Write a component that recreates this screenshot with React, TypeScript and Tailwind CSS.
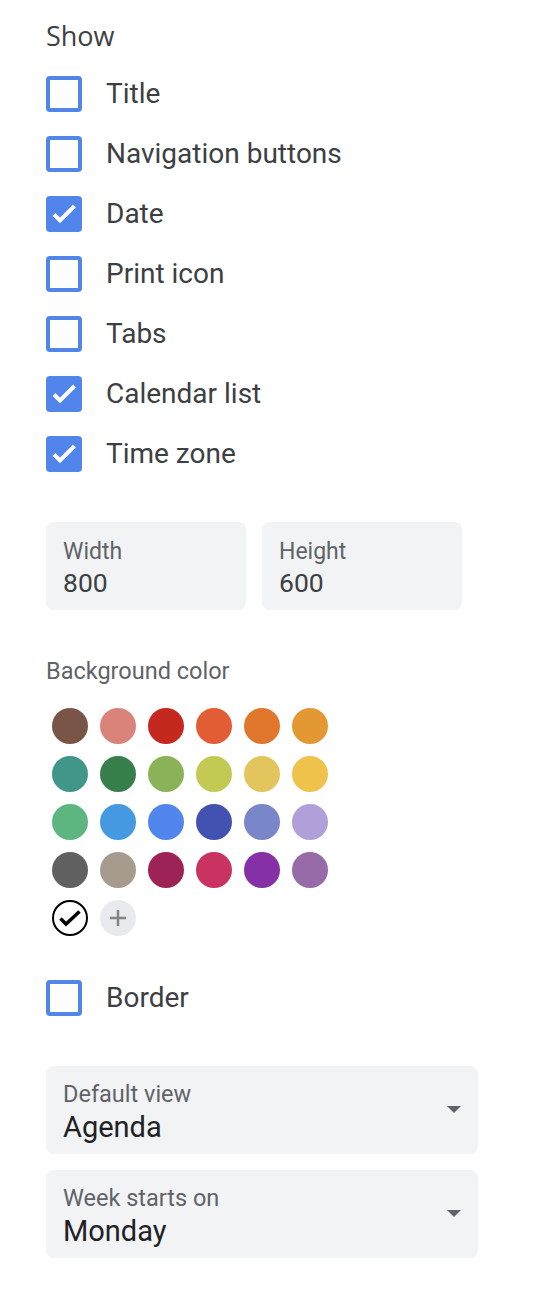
const options = [
  { label: "Title", checked: false },
  { label: "Navigation buttons", checked: false },
  { label: "Date", checked: true },
  { label: "Print icon", checked: false },
  { label: "Tabs", checked: false },
  { label: "Calendar list", checked: true },
  { label: "Time zone", checked: true },
];

const colors = [
  ["#795548", "#d9837a", "#c5281e", "#e35d34", "#e0772c", "#e49833"],
  ["#41968a", "#367f4b", "#8ab259", "#c3ca54", "#e2c55d", "#efc24b"],
  ["#5db57f", "#4599e0", "#5386ed", "#4351b0", "#7986c9", "#b19fd9"],
  ["#616161", "#a79b8e", "#9d2357", "#c83361", "#8530a6", "#976ba8"],
];

const Checkbox = ({ checked }: { checked: boolean }) =>
  checked ? (
    <div className="w-9 h-9 rounded-[4px] bg-[#5185ec]">
      <svg width="36" height="36" viewBox="0 0 36 36">
        <path d="M8 18.5l6 6L28.5 10" fill="none" stroke="white" strokeWidth="4" />
      </svg>
    </div>
  ) : (
    <div className="w-9 h-9 rounded-[4px] border-[4px] border-[#5185ec] bg-white" />
  );

const CheckRow = ({ label, checked }: { label: string; checked: boolean }) => (
  <div className="h-[60px] flex items-center">
    <Checkbox checked={checked} />
    <span className="ml-[24px] text-[28px] text-[#3c4043]">{label}</span>
  </div>
);

const Caret = () => (
  <svg width="16" height="8" viewBox="0 0 16 8" className="mr-[16px]">
    <path d="M1 0h14L8 7z" fill="#5f6368" />
  </svg>
);

const SelectBox = ({ label, value }: { label: string; value: string }) => (
  <div className="w-[432px] h-[88px] rounded-[8px] bg-[#f1f3f4] flex items-center justify-between pl-[17px]">
    <div className="flex flex-col pt-[4px]">
      <span className="text-[23.5px] leading-[30px] text-[#5f6368]">{label}</span>
      <span className="text-[29px] leading-[36px] text-[#202124]">{value}</span>
    </div>
    <Caret />
  </div>
);

export default function App() {
  return (
    <div
      className="min-h-[1294px] bg-white pl-[46px] pt-[20px]"
      style={{ fontFamily: "Roboto, 'Liberation Sans', sans-serif" }}
    >
      <div className="text-[27px] leading-[32px] font-medium text-[#3c4043] font-['Open_Sans',Roboto,sans-serif]">
        Show
      </div>
      <div className="mt-[12px] flex flex-col">
        {options.map((o) => (
          <CheckRow key={o.label} label={o.label} checked={o.checked} />
        ))}
      </div>

      <div className="mt-[38px] flex gap-4">
        {[
          { label: "Width", value: "800" },
          { label: "Height", value: "600" },
        ].map((f) => (
          <div
            key={f.label}
            className="w-[200px] h-[88px] rounded-[8px] bg-[#f1f3f4] pl-[17px] pt-[4px] flex flex-col justify-center"
          >
            <span className="text-[23px] leading-[30px] text-[#5f6368]">{f.label}</span>
            <span className="text-[26.5px] leading-[32px] text-[#3c4043]">{f.value}</span>
          </div>
        ))}
      </div>

      <div className="mt-[47px] text-[23.5px] leading-[28px] text-[#5f6368]">
        Background color
      </div>
      <div className="mt-[23px] ml-[6px] flex flex-col gap-3">
        {colors.map((row, i) => (
          <div key={i} className="flex gap-3">
            {row.map((c) => (
              <div key={c} className="w-9 h-9 rounded-full" style={{ backgroundColor: c }} />
            ))}
          </div>
        ))}
        <div className="flex gap-3">
          <div className="w-9 h-9 rounded-full border-2 border-black bg-white">
            <svg width="32" height="32" viewBox="0 0 32 32">
              <path d="M6.5 16.5l5.5 5.5L25.5 9.5" fill="none" stroke="black" strokeWidth="3.5" />
            </svg>
          </div>
          <div className="w-9 h-9 rounded-full bg-[#e8eaed] flex items-center justify-center">
            <svg width="18" height="18" viewBox="0 0 18 18">
              <path d="M9 1v16M1 9h16" stroke="#80868b" strokeWidth="2.5" />
            </svg>
          </div>
        </div>
      </div>

      <div className="mt-[32px]">
        <CheckRow label="Border" checked={false} />
      </div>

      <div className="mt-[38px] flex flex-col gap-4">
        <SelectBox label="Default view" value="Agenda" />
        <SelectBox label="Week starts on" value="Monday" />
      </div>
    </div>
  );
}
